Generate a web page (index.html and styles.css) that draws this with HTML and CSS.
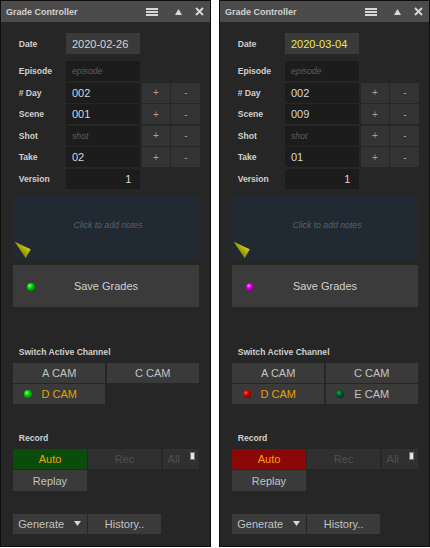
FILE: index.html
```html
<!DOCTYPE html>
<html lang="en">
<head>
  <meta charset="UTF-8" />
  <meta name="viewport" content="width=device-width, initial-scale=1.0"/>
  <title>Grade Controller</title>
  <link rel="stylesheet" href="styles.css">
</head>
<body>
  <!-- left panel -->
  <div class="panel">
    <div class="titlebar">
      <span class="title">Grade Controller</span>
      <svg class="ico-menu" width="12" height="8" viewBox="0 0 12 8"><rect x="0" y="0" width="12" height="2"/><rect x="0" y="3" width="12" height="2"/><rect x="0" y="6" width="12" height="2"/></svg>
      <svg class="ico-up" width="7" height="6" viewBox="0 0 7 6"><polygon points="3.5,0 7,6 0,6"/></svg>
      <svg class="ico-close" width="9" height="9" viewBox="0 0 9 9"><path d="M1 1 L8 8 M8 1 L1 8"/></svg>
    </div>
    <div class="content">
      <div class="fields date-row">
        <label>Date</label>
        <div class="input light">2020-02-26</div>
      </div>
      <div class="fields">
        <label>Episode</label>
        <div class="input empty">episode</div>
        <span></span><span></span>
        <label># Day</label>
        <div class="input">002</div>
        <button class="step">+</button><button class="step">-</button>
        <label>Scene</label>
        <div class="input">001</div>
        <button class="step">+</button><button class="step">-</button>
        <label>Shot</label>
        <div class="input empty">shot</div>
        <button class="step">+</button><button class="step">-</button>
        <label>Take</label>
        <div class="input">02</div>
        <button class="step">+</button><button class="step">-</button>
        <label>Version</label>
        <div class="input num">1</div>
      </div>

      <div class="notes">
        <span>Click to add notes</span>
        <svg class="grip" width="20" height="20" viewBox="0 0 20 20">
          <defs>
            <linearGradient id="gripA" x1="0" y1="1" x2="1" y2="0">
              <stop offset="0" stop-color="#3a3a00"/>
              <stop offset="0.45" stop-color="#9a9a00"/>
              <stop offset="1" stop-color="#ffff30"/>
            </linearGradient>
          </defs>
          <polygon points="1.7,2.7 17.7,10.3 12.7,19.3" fill="url(#gripA)"/>
        </svg>
      </div>

      <button class="save"><span class="dot green save-dot"></span>Save Grades</button>

      <div class="section">Switch Active Channel</div>
      <div class="cams">
        <button class="btn">A CAM</button>
        <button class="btn">C CAM</button>
        <button class="btn active"><span class="dot green"></span>D CAM</button>
      </div>

      <div class="section record-label">Record</div>
      <div class="record">
        <button class="btn auto-green">Auto</button>
        <button class="btn off">Rec</button>
        <button class="btn off all">All<span class="flag"></span></button>
        <button class="btn">Replay</button>
      </div>

      <div class="footer">
        <button class="btn gen">Generate <svg width="7" height="5" viewBox="0 0 7 5"><polygon points="0,0 7,0 3.5,5"/></svg></button>
        <button class="btn">History..</button>
      </div>
    </div>
  </div>

  <!-- right panel -->
  <div class="panel">
    <div class="titlebar">
      <span class="title">Grade Controller</span>
      <svg class="ico-menu" width="12" height="8" viewBox="0 0 12 8"><rect x="0" y="0" width="12" height="2"/><rect x="0" y="3" width="12" height="2"/><rect x="0" y="6" width="12" height="2"/></svg>
      <svg class="ico-up" width="7" height="6" viewBox="0 0 7 6"><polygon points="3.5,0 7,6 0,6"/></svg>
      <svg class="ico-close" width="9" height="9" viewBox="0 0 9 9"><path d="M1 1 L8 8 M8 1 L1 8"/></svg>
    </div>
    <div class="content">
      <div class="fields date-row">
        <label>Date</label>
        <div class="input light changed">2020-03-04</div>
      </div>
      <div class="fields">
        <label>Episode</label>
        <div class="input empty">episode</div>
        <span></span><span></span>
        <label># Day</label>
        <div class="input">002</div>
        <button class="step">+</button><button class="step">-</button>
        <label>Scene</label>
        <div class="input">009</div>
        <button class="step">+</button><button class="step">-</button>
        <label>Shot</label>
        <div class="input empty">shot</div>
        <button class="step">+</button><button class="step">-</button>
        <label>Take</label>
        <div class="input">01</div>
        <button class="step">+</button><button class="step">-</button>
        <label>Version</label>
        <div class="input num">1</div>
      </div>

      <div class="notes">
        <span>Click to add notes</span>
        <svg class="grip" width="20" height="20" viewBox="0 0 20 20">
          <defs>
            <linearGradient id="gripB" x1="0" y1="1" x2="1" y2="0">
              <stop offset="0" stop-color="#3a3a00"/>
              <stop offset="0.45" stop-color="#9a9a00"/>
              <stop offset="1" stop-color="#ffff30"/>
            </linearGradient>
          </defs>
          <polygon points="1.7,2.7 17.7,10.3 12.7,19.3" fill="url(#gripB)"/>
        </svg>
      </div>

      <button class="save"><span class="dot magenta save-dot"></span>Save Grades</button>

      <div class="section">Switch Active Channel</div>
      <div class="cams">
        <button class="btn">A CAM</button>
        <button class="btn">C CAM</button>
        <button class="btn active"><span class="dot red"></span>D CAM</button>
        <button class="btn"><span class="dot dark-green"></span>E CAM</button>
      </div>

      <div class="section record-label">Record</div>
      <div class="record">
        <button class="btn auto-red">Auto</button>
        <button class="btn off">Rec</button>
        <button class="btn off all">All<span class="flag"></span></button>
        <button class="btn">Replay</button>
      </div>

      <div class="footer">
        <button class="btn gen">Generate <svg width="7" height="5" viewBox="0 0 7 5"><polygon points="0,0 7,0 3.5,5"/></svg></button>
        <button class="btn">History..</button>
      </div>
    </div>
  </div>
</body>
</html>
```

FILE: styles.css
```css
body {
  margin: 0;
  background: #fff;
  display: flex;
  gap: 8px;
  font-family: "Liberation Sans", Arial, sans-serif;
}
.panel {
  width: 211px;
  height: 547px;
  box-sizing: border-box;
  background: #262626;
  border: 1px solid #0e0e0e;
}
.titlebar {
  height: 21px;
  background: #4b4b4b;
  display: flex;
  align-items: center;
  padding: 0 5.7px 0 5px;
}
.titlebar svg {
  fill: #d8d8d8;
  stroke: #d8d8d8;
}
.title {
  font-size: 9px;
  font-weight: bold;
  color: #d2d2d2;
  margin-right: auto;
}
.ico-menu {
  stroke: none !important;
  margin-right: 17.4px;
}
.ico-up {
  stroke: none !important;
  margin-right: 13.2px;
}
.ico-close {
  fill: none !important;
  stroke-width: 1.8;
}
.content {
  padding: 11px 11.3px 0 12.3px;
}
.fields {
  display: grid;
  grid-template-columns: 51.7px 74px 28px 29px;
  grid-auto-rows: 20px;
  column-gap: 1.5px;
  row-gap: 1.5px;
  margin-top: 7px;
}
.date-row {
  grid-auto-rows: 21px;
  margin-top: 0;
}
label {
  font-size: 8.6px;
  font-weight: bold;
  color: #cfcfcf;
  padding-left: 5.4px;
  display: flex;
  align-items: center;
}
.input {
  background: #1c1c1c;
  color: #d6d6d6;
  font-size: 11px;
  padding-left: 5.5px;
  display: flex;
  align-items: center;
}
.input.light {
  background: #3a3a3a;
}
.input.changed {
  color: #eaea48;
}
.input.empty {
  font-size: 8.7px;
  font-style: italic;
  color: #5e5e5e;
}
.input.num {
  justify-content: flex-end;
  padding-right: 9px;
}
button {
  font-family: inherit;
  border: none;
  padding: 0;
  margin: 0;
  cursor: pointer;
}
.step {
  background: #333;
  color: #a0a0a0;
  font-size: 10px;
}
.notes {
  position: relative;
  margin-top: 6.5px;
  height: 64px;
  background: #212932;
  display: flex;
  justify-content: center;
  padding: 24px 0 0 4px;
  box-sizing: border-box;
}
.notes span {
  font-size: 8.7px;
  font-style: italic;
  color: #5b6169;
  line-height: 12px;
}
.grip {
  position: absolute;
  left: 0;
  top: 44px;
}
.save {
  position: relative;
  display: block;
  width: 100%;
  height: 42px;
  margin-top: 6px;
  background: #3b3b3b;
  color: #cfcfcf;
  font-size: 11px;
}
.dot {
  position: absolute;
  width: 8px;
  height: 8px;
  border-radius: 50%;
  left: 10.5px;
  top: 6px;
}
.save-dot {
  left: 14px;
  top: 18px;
}
.green {
  background: radial-gradient(circle at 35% 35%, #8f8 0, #0d0 30%, #050 100%);
}
.magenta {
  background: radial-gradient(circle at 35% 35%, #f8f 0, #d0d 30%, #404 100%);
}
.red {
  background: radial-gradient(circle at 35% 35%, #f66 0, #d00 30%, #400 100%);
}
.dark-green {
  background: radial-gradient(circle at 35% 35%, #3a3 0, #063 30%, #011 100%);
}
.section {
  font-size: 8.6px;
  font-weight: bold;
  color: #cfcfcf;
  line-height: 12px;
  padding-left: 5.4px;
  margin-top: 39px;
}
.record-label {
  margin-top: 28px;
}
.cams {
  display: grid;
  grid-template-columns: 1fr 1fr;
  grid-auto-rows: 20px;
  gap: 1.5px 1.7px;
  margin-top: 4.5px;
}
.btn {
  position: relative;
  background: #3a3a3a;
  color: #c2c2c2;
  font-size: 11px;
}
.btn.active {
  color: #e6a100;
}
.record {
  display: grid;
  grid-template-columns: 73.4px 72.7px 36px;
  grid-auto-rows: 20.5px;
  gap: 1.2px 1.6px;
  margin-top: 4.8px;
}
.auto-green {
  background: #0b4b0b;
  color: #f0a400;
}
.auto-red {
  background: #8a0808;
  color: #ff9c00;
}
.btn.off {
  background: #303030;
  color: #4f4f4f;
}
.all {
  text-align: left;
  padding-left: 5px;
}
.flag {
  position: absolute;
  right: 3.7px;
  top: 3px;
  width: 3px;
  height: 6px;
  background: #e6e6e6;
  border: 0.5px solid #777;
}
.footer {
  display: grid;
  grid-template-columns: 73.4px 72.7px;
  grid-auto-rows: 20px;
  gap: 1.6px;
  margin-top: 23px;
}
.gen {
  display: flex;
  align-items: center;
  justify-content: space-between;
  padding: 0 5.4px 0 5px;
}
.gen svg {
  fill: #d8d8d8;
}
```
